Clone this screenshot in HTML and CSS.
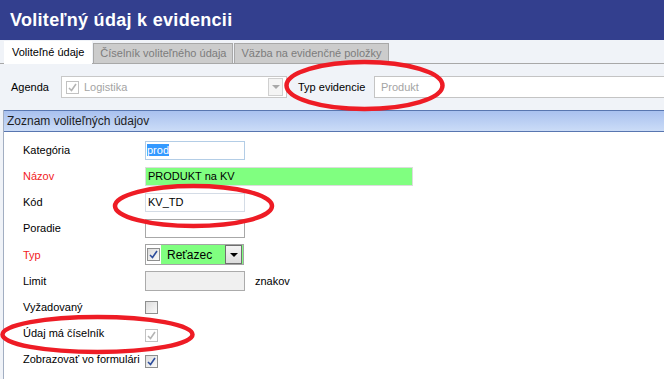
FILE: index.html
```html
<!DOCTYPE html>
<html lang="sk">
<head>
  <meta charset="UTF-8">
  <title>Voliteľný údaj k evidencii</title>
  <link rel="stylesheet" href="styles.css">
</head>
<body>
  <div class="title-bar">
    <h1>Voliteľný údaj k evidencii</h1>
  </div>

  <div class="tabs">
    <div class="tab active">Voliteľné údaje</div>
    <div class="tab">Číselník voliteľného údaja</div>
    <div class="tab">Väzba na evidenčné položky</div>
  </div>

  <div class="filter">
    <span class="filter-label">Agenda</span>
    <div class="combo disabled">
      <span class="check off">
        <svg width="11" height="11" viewBox="0 0 11 11"><polyline points="2,6 4.5,8.5 9,2" /></svg>
      </span>
      <span class="combo-text">Logistika</span>
      <span class="combo-btn"><span class="arrow"></span></span>
    </div>
    <span class="filter-label type">Typ evidencie</span>
    <div class="field readonly">Produkt</div>
  </div>

  <div class="panel">
    <div class="panel-head">Zoznam voliteľných údajov</div>
    <div class="form">
      <span class="label">Kategória</span>
      <div><div class="field focus"><span class="selected">prod</span></div></div>

      <span class="label required">Názov</span>
      <div><div class="field wide green">PRODUKT na KV</div></div>

      <span class="label">Kód</span>
      <div><div class="field light">KV_TD</div></div>

      <span class="label">Poradie</span>
      <div><div class="field"></div></div>

      <span class="label required">Typ</span>
      <div>
        <div class="combo green">
          <span class="check-cell">
            <span class="check">
              <svg width="11" height="11" viewBox="0 0 11 11"><polyline points="2,6 4.5,8.5 9,2" /></svg>
            </span>
          </span>
          <span class="combo-text">Reťazec</span>
          <span class="combo-btn dark"><span class="arrow"></span></span>
        </div>
      </div>

      <span class="label">Limit</span>
      <div class="inline">
        <div class="field grey"></div>
        <span class="unit">znakov</span>
      </div>

      <span class="label">Vyžadovaný</span>
      <div><span class="check empty"></span></div>

      <span class="label">Údaj má číselník</span>
      <div>
        <span class="check off low">
          <svg width="11" height="11" viewBox="0 0 11 11"><polyline points="2,6 4.5,8.5 9,2" /></svg>
        </span>
      </div>

      <span class="label">Zobrazovať vo formulári</span>
      <div>
        <span class="check low">
          <svg width="11" height="11" viewBox="0 0 11 11"><polyline points="2,6 4.5,8.5 9,2" /></svg>
        </span>
      </div>
    </div>
  </div>

  <!-- cervene oznacenia cez formular -->
  <svg class="marks" width="664" height="379" viewBox="0 0 664 379">
    <ellipse cx="364.5" cy="85.5" rx="78" ry="23.5" />
    <ellipse cx="193.5" cy="206" rx="78.5" ry="20" />
    <ellipse cx="97.5" cy="334.5" rx="95" ry="17.5" />
  </svg>
</body>
</html>
```

FILE: styles.css
```css
body {
  margin: 0;
  background: #f0f3f8;
  font-family: "Liberation Sans", Arial, sans-serif;
  font-size: 11px;
  color: #000;
  position: relative;
  width: 664px;
  height: 379px;
  overflow: hidden;
}
.title-bar {
  height: 40px;
  background: #333f8e;
}
.title-bar h1 {
  margin: 0;
  padding-left: 10px;
  line-height: 40px;
  font-size: 18px;
  letter-spacing: 0.3px;
  color: #fff;
}
.tabs {
  display: flex;
  align-items: flex-end;
  height: 23px;
  padding-left: 4px;
  border-bottom: 1px solid #a8a8a8;
}
.tab {
  height: 19px;
  line-height: 19px;
  padding: 0 6px;
  margin-right: 1px;
  background: #cccccc;
  border: 1px solid #a8a8a8;
  border-bottom: none;
  color: #7c7c7c;
}
.tab.active {
  height: 23px;
  line-height: 22px;
  padding: 0 8px;
  background: #fff;
  border: none;
  color: #000;
  margin-bottom: -1px;
}
.filter {
  display: flex;
  align-items: center;
  height: 46px;
  padding-left: 11px;
}
.filter-label {
  width: 50px;
}
.filter-label.type {
  width: 76px;
  margin-left: 11px;
}
.field {
  box-sizing: border-box;
  width: 100px;
  height: 19px;
  line-height: 17px;
  padding-left: 2px;
  background: #fff;
  border: 1px solid #a8a8a8;
  white-space: nowrap;
}
.filter .field {
  flex: 1;
  height: 22px;
  line-height: 20px;
  margin-right: -10px;
  padding-left: 6px;
  border-color: #c4c4c4;
}
.field.readonly {
  color: #a4a4a4;
}
.field.focus {
  border-color: #b3cde6;
  padding-left: 1px;
}
.field.light {
  border-color: #d4dce6;
}
.field.wide {
  width: 268px;
}
.field.green {
  background: #80ff80;
  border-color: #dcdcdc;
}
.field.grey {
  height: 20px;
  background: #f0f0f0;
  border-color: #ababab;
}
.selected {
  background: #3399ff;
  color: #fff;
}
.combo {
  box-sizing: border-box;
  display: flex;
  align-items: center;
  height: 22px;
  background: #fff;
  border: 1px solid #a0a0a0;
}
.combo.disabled {
  width: 226px;
  border-color: #c8c8c8;
  padding-left: 4px;
}
.combo.disabled .combo-text {
  color: #a4a4a4;
  margin-left: 5px;
}
.combo.green {
  width: 99px;
  height: 21px;
  background: #80ff80;
  border-color: #a4a4a4;
}
.combo.green .combo-text {
  margin-left: 6px;
  font-size: 12px;
}
.combo-text {
  flex: 1;
}
.check-cell {
  display: flex;
  align-items: center;
  justify-content: center;
  width: 15px;
  height: 19px;
  background: #fff;
}
.combo-btn {
  box-sizing: border-box;
  display: flex;
  align-items: center;
  justify-content: center;
  width: 15px;
  height: 18px;
  margin-right: 3px;
  border: 1px solid #d0d0d0;
  background: #f4f4f4;
}
.combo-btn.dark {
  width: 17px;
  height: 19px;
  margin-right: 1px;
  border-color: #6f6f6f;
  background: linear-gradient(#f4f4f4, #dcdcdc);
}
.arrow {
  width: 0;
  height: 0;
  border-left: 4px solid transparent;
  border-right: 4px solid transparent;
  border-top: 4px solid #a8a8a8;
}
.combo-btn.dark .arrow {
  border-top-color: #000;
}
.check {
  box-sizing: border-box;
  display: inline-flex;
  align-items: center;
  justify-content: center;
  width: 13px;
  height: 13px;
  border: 1px solid #8e8f8f;
  background: linear-gradient(135deg, #dcdcdc, #fafafa);
  vertical-align: middle;
}
.check svg polyline {
  fill: none;
  stroke: #2d4d9c;
  stroke-width: 1.6;
}
.check.off {
  border-color: #c2c2c2;
  background: #fff;
}
.check.off svg polyline {
  stroke: #b4b4b4;
}
.check.low {
  margin-top: 5px;
}
.panel {
  margin-left: 3px;
  border-left: 1px solid #a2aec2;
  background: #fff;
  height: 269px;
}
.panel-head {
  box-sizing: border-box;
  height: 22px;
  line-height: 20px;
  padding-left: 3px;
  border-top: 1px solid #5876b0;
  border-bottom: 1px solid #5876b0;
  background: linear-gradient(#a9c1ef, #cbdcf7);
  color: #1e1e1e;
  font-size: 12px;
}
.form {
  display: grid;
  grid-template-columns: 122px 1fr;
  grid-template-rows: 26px 26px 26px 26px 27px 26px 26px 26px 26px;
  align-items: center;
  padding: 5px 0 0 19px;
}
.label {
  font-size: 11px;
}
.label.required {
  color: #f21c24;
}
.inline {
  display: flex;
  align-items: center;
}
.unit {
  margin-left: 10px;
}
.marks {
  position: absolute;
  left: 0;
  top: 0;
  pointer-events: none;
}
.marks ellipse {
  fill: none;
  stroke: #ee1c25;
  stroke-width: 4.5;
}
```
